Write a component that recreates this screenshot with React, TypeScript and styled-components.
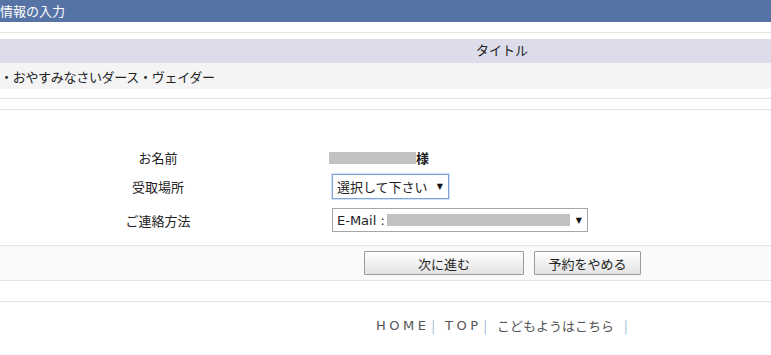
import React from 'react';
import styled, { createGlobalStyle } from 'styled-components';

const GlobalStyle = createGlobalStyle`
  html, body {
    margin: 0;
    padding: 0;
    background: #fff;
  }
  body {
    font-family: "Noto Sans CJK JP", "DejaVu Sans", sans-serif;
    font-size: 13px;
    color: #222;
    overflow: hidden;
  }
`;

const Page = styled.div`
  width: 771px;
  height: 355px;
  display: flex;
  flex-direction: column;
`;

const Header = styled.div`
  height: 22px;
  line-height: 21px;
  background: #5573a5;
  color: #fff;
  font-size: 13px;
  margin-bottom: 10px;
`;

const Rule = styled.div<{ $after?: number }>`
  height: 1px;
  background: #e4e4e4;
  margin-bottom: ${(p) => p.$after ?? 0}px;
`;

const TitleBand = styled.div`
  height: 24px;
  line-height: 22px;
  background: #dcdcea;
  display: flex;
  justify-content: center;
  padding-left: 233px;
`;

const ItemRow = styled.div`
  height: 26px;
  background: #f4f4f4;
  display: flex;
  align-items: center;
  margin-bottom: 9px;
  letter-spacing: -0.3px;
`;

const Form = styled.div`
  display: grid;
  grid-template-columns: 316px 1fr;
  grid-template-rows: 25px 33px 34px;
  align-items: center;
  margin-top: 35px;
  margin-bottom: 8px;
`;

const Label = styled.div`
  text-align: center;
  line-height: 1;
`;

const Value = styled.div`
  display: flex;
  align-items: center;
  padding-left: 13px;
`;

const Masked = styled.span<{ $w: number }>`
  display: inline-block;
  width: ${(p) => p.$w}px;
  height: 12px;
  background: #c2c2c2;
`;

const Honor = styled.span`
  font-weight: bold;
  line-height: 1;
`;

const FakeSelect = styled.div<{ $w: number; $focus?: boolean }>`
  box-sizing: border-box;
  width: ${(p) => p.$w}px;
  height: ${(p) => (p.$focus ? 25 : 24)}px;
  margin-left: 3px;
  border: 1px solid ${(p) => (p.$focus ? '#7fa3d8' : '#a6a6a6')};
  box-shadow: ${(p) => (p.$focus ? '0 0 0 1px #d3e1f4' : 'none')};
  background: #fff;
  display: flex;
  align-items: center;
  padding: 0 5px 0 4px;
  gap: 2px;
`;

const SelectText = styled.span`
  font-family: "DejaVu Sans", "Noto Sans CJK JP", sans-serif;
  font-size: 13px;
  white-space: nowrap;
`;

const Arrow = styled.span`
  margin-left: auto;
  font-family: "DejaVu Sans", sans-serif;
  font-size: 8px;
  color: #111;
`;

const ButtonBand = styled.div`
  height: 34px;
  background: #fafafa;
  border-top: 1px solid #e4e4e4;
  border-bottom: 1px solid #e4e4e4;
  display: flex;
  align-items: center;
  padding-left: 364px;
  gap: 10px;
  margin-bottom: 20px;
`;

const Button = styled.button<{ $w: number }>`
  box-sizing: border-box;
  width: ${(p) => p.$w}px;
  height: 24px;
  border: 1px solid #9c9c9c;
  border-radius: 1px;
  background: linear-gradient(#ffffff, #e3e3e3);
  font-family: "Noto Sans CJK JP", sans-serif;
  font-size: 13px;
  color: #222;
  padding: 0;
`;

const Footer = styled.div`
  display: flex;
  align-items: center;
  padding-left: 376px;
  padding-top: 14px;
  color: #555;
  font-size: 13px;
`;

const FooterLink = styled.span<{ $spaced?: boolean }>`
  letter-spacing: ${(p) => (p.$spaced ? '3.5px' : '0')};
  font-family: "DejaVu Sans", "Noto Sans CJK JP", sans-serif;
`;

const Sep = styled.span<{ $gap?: number }>`
  color: #8fb3d9;
  margin: 0 10px 0 ${(p) => p.$gap ?? 2}px;
`;

export default function App() {
  return (
    <>
      <GlobalStyle />
      <Page>
        <Header>情報の入力</Header>
        <Rule $after={6} />
        <TitleBand>タイトル</TitleBand>
        <ItemRow>・おやすみなさいダース・ヴェイダー</ItemRow>
        <Rule $after={10} />
        <Rule />
        <Form>
          <Label>お名前</Label>
          <Value>
            <Masked $w={87} />
            <Honor>様</Honor>
          </Value>
          <Label>受取場所</Label>
          <Value>
            <FakeSelect $w={117} $focus>
              <SelectText>選択して下さい</SelectText>
              <Arrow>▼</Arrow>
            </FakeSelect>
          </Value>
          <Label>ご連絡方法</Label>
          <Value>
            <FakeSelect $w={256}>
              <SelectText>E-Mail :</SelectText>
              <Masked $w={183} />
              <Arrow>▼</Arrow>
            </FakeSelect>
          </Value>
        </Form>
        <ButtonBand>
          <Button $w={160}>次に進む</Button>
          <Button $w={107}>予約をやめる</Button>
        </ButtonBand>
        <Rule />
        <Footer>
          <FooterLink $spaced>HOME</FooterLink>
          <Sep>|</Sep>
          <FooterLink $spaced>TOP</FooterLink>
          <Sep>|</Sep>
          <FooterLink>こどもようはこちら</FooterLink>
          <Sep $gap={10}>|</Sep>
        </Footer>
      </Page>
    </>
  );
}
